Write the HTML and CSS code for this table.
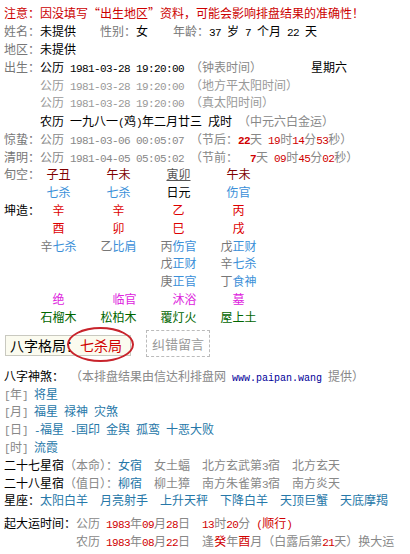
FILE: index.html
```html
<!DOCTYPE html>
<html lang="zh-CN">
<head>
<meta charset="utf-8">
<title>八字排盘</title>
<link rel="stylesheet" href="styles.css">
</head>
<body>
<div class="page">
  <div class="ln warn">注意：因没填写“出生地区”资料，可能会影响排盘结果的准确性！</div>
  <div class="ln"><span class="w96"><span class="lb">姓名：</span>未提供</span><span class="w73"><span class="lb">性别：</span>女</span><span class="lb">年龄：</span><span class="n">37</span><i class="s1"></i>岁<i class="s1"></i><span class="n">7</span><i class="s1"></i>个月<i class="s1"></i><span class="n">22</span><i class="s1"></i>天</div>
  <div class="ln"><span class="lb">地区：</span>未提供</div>
  <div class="ln"><span class="lb">出生：</span><span class="w271">公历<i class="s1"></i><span class="n">1981-03-28 19:20:00</span><i class="s1"></i><span class="gr">（钟表时间）</span></span>星期六</div>
  <div class="ln ind lt">公历<i class="s1"></i><span class="n">1981-03-28 19:20:00</span><i class="s1"></i>（地方平太阳时间）</div>
  <div class="ln ind lt">公历<i class="s1"></i><span class="n">1981-03-28 19:20:00</span><i class="s1"></i>（真太阳时间）</div>
  <div class="ln ind nongli">农历<i class="s1"></i>一九八一<span class="n">(</span>鸡<span class="n">)</span>年二月廿三<i class="s1"></i>戌时<i class="s1"></i><span class="gr">（中元六白金运）</span></div>
  <div class="ln gr"><span class="lb">惊蛰：</span>公历<i class="s1"></i><span class="n">1981-03-06 00:05:07</span><i class="s1"></i>（节后：<b class="r n">22</b>天<i class="s1"></i><span class="r n">19</span>时<span class="r n">14</span>分<span class="r n">53</span>秒）</div>
  <div class="ln gr"><span class="lb">清明：</span>公历<i class="s1"></i><span class="n">1981-04-05 05:05:02</span><i class="s1"></i>（节前：<i class="s2"></i><b class="r n">7</b>天<i class="s1"></i><span class="r n">09</span>时<span class="r n">45</span>分<span class="r n">02</span>秒）</div>

  <div class="pillars">
    <span class="pl lb">旬空：</span><span class="dr">子丑</span><span class="dr">午未</span><span class="kw">寅卯</span><span class="dr">午未</span>
    <span></span><span class="bl">七杀</span><span class="bl">七杀</span><span>日元</span><span class="bl">伤官</span>
    <span class="pl">坤造：</span><span class="rd">辛</span><span class="rd">辛</span><span class="rd">乙</span><span class="rd">丙</span>
    <span></span><span class="rd">酉</span><span class="rd">卯</span><span class="rd">巳</span><span class="rd">戌</span>
    <span></span><span class="hs">辛<em>七杀</em></span><span class="hs">乙<em>比肩</em></span><span class="hs">丙<em>伤官</em></span><span class="hs">戊<em>正财</em></span>
    <span></span><span></span><span></span><span class="hs">戊<em>正财</em></span><span class="hs">辛<em>七杀</em></span>
    <span></span><span></span><span></span><span class="hs">庚<em>正官</em></span><span class="hs">丁<em>食神</em></span>
    <span></span><span class="mg">绝</span><span class="mg sh">临官</span><span class="mg sh">沐浴</span><span class="mg">墓</span>
    <span></span><span class="gn">石榴木</span><span class="gn">松柏木</span><span class="gn">覆灯火</span><span class="gn">屋上土</span>
  </div>

  <div class="geju-row">
    <div class="geju">八字格局：<span class="r">七杀局</span><span class="ring"></span></div>
    <div class="jiucuo">纠错留言</div>
  </div>

  <div class="ln">八字神煞：<span class="note">（本排盘结果由信达利排盘网<span class="url"> www.paipan.wang </span>提供）</span></div>
  <div class="ln sline"><span class="tag"><span class="n">[</span>年<span class="n">]</span></span><span>将星</span></div>
  <div class="ln sline"><span class="tag"><span class="n">[</span>月<span class="n">]</span></span><span>福星</span><span>禄神</span><span>灾煞</span></div>
  <div class="ln sline"><span class="tag"><span class="n">[</span>日<span class="n">]</span></span><span><span class="n">-</span>福星</span><span><span class="n">-</span>国印</span><span>金舆</span><span>孤鸾</span><span>十恶大败</span></div>
  <div class="ln sline"><span class="tag"><span class="n">[</span>时<span class="n">]</span></span><span>流霞</span></div>

  <div class="ln xs"><span>二十七星宿<span class="gr">（本命）：</span><span class="sb">女宿</span></span><span>女土蝠</span><span>北方玄武第<span class="n">3</span>宿</span><span>北方玄天</span></div>
  <div class="ln xs"><span>二十八星宿<span class="gr">（值日）：</span><span class="sb">柳宿</span></span><span>柳土獐</span><span>南方朱雀第<span class="n">3</span>宿</span><span>南方炎天</span></div>
  <div class="ln xz"><span class="xz-lb">星座：</span><div class="xz-list"><span>太阳白羊</span><span>月亮射手</span><span>上升天秤</span><span>下降白羊</span><span>天顶巨蟹</span><span>天底摩羯</span></div></div>

  <div class="ln qiyun"><span class="qy-lb">起大运时间：</span><span class="gr">公历<i class="s1"></i><span class="r n">1983</span>年<span class="r n">09</span>月<span class="r n">28</span>日<i class="s2"></i><span class="r n">13</span>时<span class="r n">20</span>分<i class="s1"></i><span class="r"><span class="n">(</span>顺行<span class="n">)</span></span></span></div>
  <div class="ln qy-ind gr">农历<i class="s1"></i><span class="r n">1983</span>年<span class="r n">08</span>月<span class="r n">22</span>日<i class="s2"></i>逢<span class="r">癸</span>年<span class="r">酉</span>月（白露后第<span class="r n">21</span>天）换大运</div>
</div>
</body>
</html>
```

FILE: styles.css
```css
* { box-sizing: border-box; }
html, body { margin: 0; padding: 0; background: #fff; }
body {
  font-family: "Noto Sans CJK SC", "Noto Sans", sans-serif;
  font-size: 12px;
  color: #000;
}
.page {
  width: 410px;
  padding: 4.4px 4px 0 4px;
  line-height: 17.8px;
}
.ln { white-space: nowrap; height: 17.8px; }
.warn { color: #cc0000; }
.lb { color: #777; }
.gr { color: #888; }
.lt { color: #999; }
.r { color: #d00000; }
b { font-weight: bold; }
i.s1, i.s2 { display: inline-block; height: 1px; }
i.s1 { width: 6px; }
i.s2 { width: 12px; }
.n {
  font-family: "Liberation Mono", monospace;
  font-size: 11px;
  letter-spacing: -0.6px;
}
.ind { padding-left: 36px; }
.w96 { display: inline-block; width: 96px; }
.w73 { display: inline-block; width: 73px; }
.w271 { display: inline-block; width: 271px; }
.nongli { margin-top: 0.9px; }

/* pillars */
.pillars {
  display: grid;
  grid-template-columns: 24.5px repeat(4, 60px);
  grid-auto-rows: 17.8px;
  text-align: center;
  white-space: nowrap;
}
.pillars .pl { text-align: left; }
.dr { color: #800000; }
.kw { color: #555; text-decoration: underline; }
.bl { color: #3b8fd8; }
.rd { color: #dd0000; }
.hs { color: #777; }
.hs em { font-style: normal; color: #3b8fd8; }
.mg { color: #dd22dd; }
.sh { padding-left: 12px; }
.gn { color: #006600; }

/* geju */
.geju-row {
  display: flex;
  align-items: center;
  gap: 15px;
  margin: 4.2px 0 10px 1px;
  height: 27px;
}
.geju {
  position: relative;
  margin-top: 4px;
  font-size: 14px;
  line-height: 19px;
  padding: 0 8px 0 4px;
  border: 1px solid #c9c9c0;
  background: #fbfbef;
  white-space: nowrap;
}
.ring {
  position: absolute;
  left: 61px;
  top: -9px;
  width: 67px;
  height: 35px;
  border: 2px solid #c8232b;
  border-radius: 50%;
}
.jiucuo {
  font-size: 13px;
  line-height: 17px;
  padding: 4px 5px;
  border: 1px dashed #bbb;
  color: #999;
  white-space: nowrap;
}

/* shensha */
.note { color: #888; margin-left: 12px; }
.url {
  font-family: "Liberation Mono", monospace;
  font-size: 10px;
  color: #000099;
}
.sline { display: flex; gap: 6px; color: #2677a8; }
.tag { color: #888; width: 24px; }

/* xingxiu */
.xs { display: flex; gap: 12px; color: #888; }
.xs > span:first-child { color: #000; }
.sb { color: #2677a8; }
.xz { display: flex; }
.xz-lb { width: 36px; }
.xz-list { display: flex; gap: 12px; color: #2677a8; }

/* qiyun */
.qiyun { margin-top: 5px; }
.qy-lb { display: inline-block; width: 72px; }
.qy-ind { padding-left: 72px; }
```
